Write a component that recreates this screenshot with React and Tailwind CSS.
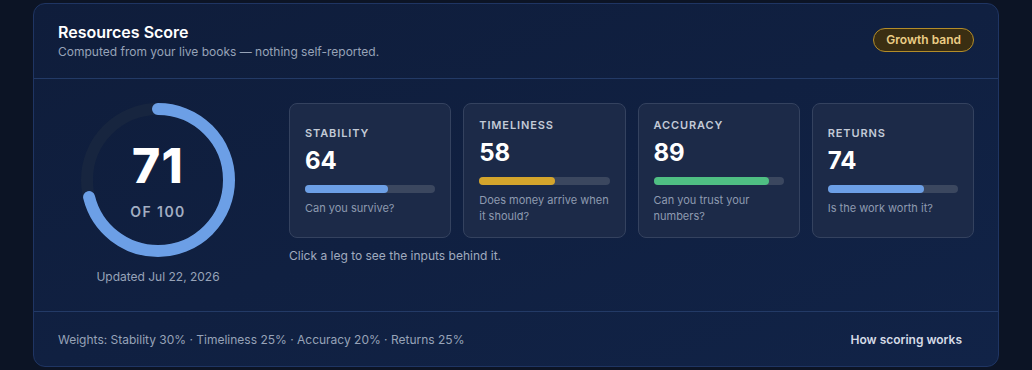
const legs = [
  { key: "stability", label: "Stability", score: 64, bar: "bg-[#6c9fe6]", hint: "Can you survive?" },
  { key: "timeliness", label: "Timeliness", score: 58, bar: "bg-[#d4a52c]", hint: "Does money arrive when it should?" },
  { key: "accuracy", label: "Accuracy", score: 89, bar: "bg-[#4fbf83]", hint: "Can you trust your numbers?" },
  { key: "returns", label: "Returns", score: 74, bar: "bg-[#6c9fe6]", hint: "Is the work worth it?" },
];

function ScoreRing({ score }) {
  const size = 154;
  const stroke = 12;
  const r = (size - stroke) / 2;
  const c = 2 * Math.PI * r;
  return (
    <div className="relative h-[154px] w-[154px]">
      <svg width={size} height={size} viewBox={`0 0 ${size} ${size}`} className="-rotate-90">
        <circle cx={size / 2} cy={size / 2} r={r} fill="none" stroke="#17253f" strokeWidth={stroke} />
        <circle
          cx={size / 2}
          cy={size / 2}
          r={r}
          fill="none"
          stroke="#6c9fe6"
          strokeWidth={stroke}
          strokeLinecap="round"
          strokeDasharray={`${(score / 100) * c} ${c}`}
        />
      </svg>
      <div className="absolute inset-0 flex flex-col items-center justify-center">
        <span className="mt-1 text-5xl leading-none font-extrabold tracking-wide text-white">{score}</span>
        <span className="mt-3 text-sm font-semibold tracking-widest text-[#a3aec2]">OF 100</span>
      </div>
    </div>
  );
}

export default function App() {
  return (
    <div className="min-h-[370px] bg-[#0c1425] px-[33px] pt-[3px] font-['Inter',sans-serif]">
      <div className="rounded-xl border border-[#1f3563] bg-gradient-to-br from-[#0f1d3b] to-[#112347]">
        <div className="flex items-center justify-between border-b border-[#233a66] px-6 pt-4 pb-[18px]">
          <div>
            <h2 className="text-base font-semibold text-white">Resources Score</h2>
            <p className="text-xs text-[#97a3b8]">Computed from your live books — nothing self-reported.</p>
          </div>
          <span className="rounded-full border border-[#b48d29] bg-[#3a2e12] px-3 py-[3px] text-xs font-semibold text-[#ebcd86]">
            Growth band
          </span>
        </div>

        <div className="flex gap-[31px] px-6 pt-6 pb-[26px]">
          <div className="flex w-[200px] flex-col items-center">
            <ScoreRing score={71} />
            <p className="mt-3 text-xs text-[#97a3b8]">Updated Jul 22, 2026</p>
          </div>
          <div className="flex-1">
            <div className="grid grid-cols-4 gap-3">
              {legs.map((leg) => (
                <button
                  key={leg.key}
                  className="flex h-[135px] flex-col justify-center rounded-lg border border-[#34425f] bg-[#1c2a48] px-[15px] py-3 text-left"
                >
                  <span className="text-[11px] leading-4 font-semibold tracking-[0.08em] text-[#c3cad7] uppercase">{leg.label}</span>
                  <span className="mt-1 text-2xl leading-8 font-bold text-white">{leg.score}</span>
                  <div className="mt-2 h-2 w-full rounded-full bg-[#3b475f]">
                    <div className={`h-2 rounded-full ${leg.bar}`} style={{ width: `${leg.score}%` }} />
                  </div>
                  <span className="mt-[7px] text-[11px] leading-4 text-[#8e9ab0]">{leg.hint}</span>
                </button>
              ))}
            </div>
            <p className="mt-2.5 text-xs text-[#a0abbf]">Click a leg to see the inputs behind it.</p>
          </div>
        </div>

        <div className="flex items-center justify-between border-t border-[#233a66] px-6 pt-5 pb-[18px]">
          <p className="text-xs text-[#97a3b8]">Weights: Stability 30% · Timeliness 25% · Accuracy 20% · Returns 25%</p>
          <button className="pr-3 text-xs font-semibold text-[#d5dbe6]">How scoring works</button>
        </div>
      </div>
    </div>
  );
}
